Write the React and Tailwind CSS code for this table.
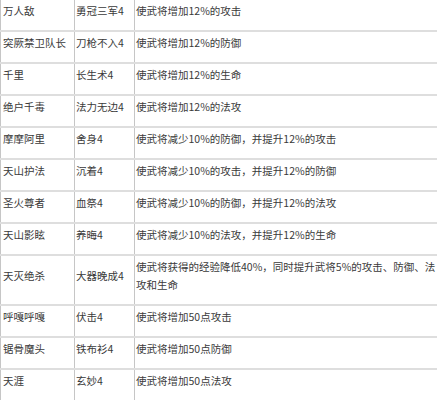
import React from "react";

const rows = [
  ["万人敌", "勇冠三军4", "使武将增加12%的攻击"],
  ["突厥禁卫队长", "刀枪不入4", "使武将增加12%的防御"],
  ["千里", "长生术4", "使武将增加12%的生命"],
  ["绝户千毒", "法力无边4", "使武将增加12%的法攻"],
  ["摩摩阿里", "舍身4", "使武将减少10%的防御，并提升12%的攻击"],
  ["天山护法", "沉着4", "使武将减少10%的攻击，并提升12%的防御"],
  ["圣火尊者", "血祭4", "使武将减少10%的防御，并提升12%的法攻"],
  ["天山影眩", "养晦4", "使武将减少10%的法攻，并提升12%的生命"],
  [
    "天灭绝杀",
    "大器晚成4",
    ["使武将获得的经验降低40%，同时提升武将5%的攻击、防御、法", "攻和生命"],
  ],
  ["呼嘎呼嘎", "伏击4", "使武将增加50点攻击"],
  ["锯骨魔头", "铁布衫4", "使武将增加50点防御"],
  ["天涯", "玄妙4", "使武将增加50点法攻"],
];

const App = () => {
  return (
    <div
      className="w-[437px] h-[400px] overflow-hidden bg-white text-[#3a3a3a] text-[10.5px] leading-[18px]"
      style={{ fontFamily: '"Noto Sans CJK SC", "Noto Sans", sans-serif' }}
    >
      <table className="w-full table-fixed border-collapse">
        <colgroup>
          <col className="w-[74px]" />
          <col className="w-[60px]" />
          <col />
        </colgroup>
        <tbody>
          {rows.map((row, i) => (
            <tr key={i} className="border-b-2 border-[#dedede]">
              <td className="border-l border-r border-[#c6c6c6] pl-[2px] pt-[2px] pb-[10px] align-middle whitespace-nowrap">
                {row[0]}
              </td>
              <td className="border-r border-[#c6c6c6] pl-[1px] pt-[2px] pb-[10px] align-middle whitespace-nowrap">
                {row[1]}
              </td>
              <td className="pl-[1px] pt-[2px] pb-[10px] align-top whitespace-nowrap">
                {Array.isArray(row[2]) ? (
                  <>
                    {row[2][0]}
                    <br />
                    {row[2][1]}
                  </>
                ) : (
                  row[2]
                )}
              </td>
            </tr>
          ))}
        </tbody>
      </table>
    </div>
  );
};

export default App;
